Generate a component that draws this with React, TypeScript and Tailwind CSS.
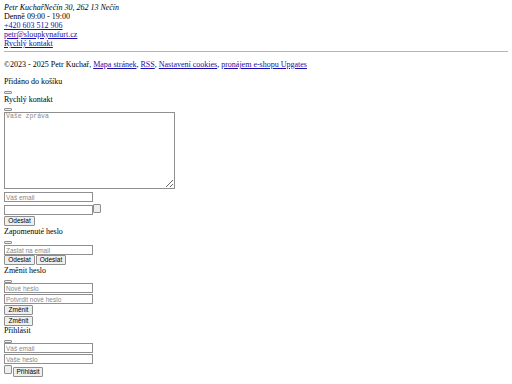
const serif = "font-['Liberation_Serif',serif]";

function Tiny({ mt }: { mt: string }) {
  return <div className={`${mt} h-[3px] w-[8px] rounded-[1px] border border-[#8f8f8f] bg-[#efefef]`} />;
}

function Field({ ph, mt = "mt-[1px]" }: { ph?: string; mt?: string }) {
  return (
    <input
      placeholder={ph}
      className={`${mt} block h-[10px] w-[89px] border border-[#8f8f8f] px-[1px] font-['Liberation_Sans',sans-serif] text-[6.5px] leading-[8px] outline-none placeholder:text-[#8a8a8a]`}
    />
  );
}

function Btn({ label, w, cls = "" }: { label: string; w: string; cls?: string }) {
  return (
    <button
      className={`${cls} ${w} h-[10px] rounded-[1px] border border-[#8f8f8f] bg-[#efefef] font-['Liberation_Sans',sans-serif] text-[6.5px] leading-[8px] text-black`}
    >
      {label}
    </button>
  );
}

export default function App() {
  const link = "text-[#1a0dab] underline";
  return (
    <div className={`${serif} h-[384px] overflow-hidden bg-white px-[4px] pt-[3px] text-[8px] leading-[9px] text-black`}>
      {/* kontakty v patičce */}
      <div className="italic">Petr KuchařNečín 30, 262 13 Nečín</div>
      <div>Denně 09:00 - 19:00</div>
      <div><a className={link}>+420 603 512 906</a></div>
      <div><a className={link}>petr@sloupkynafurt.cz</a></div>
      <div><a className={link}>Rychlý kontakt</a></div>
      <hr className="mt-[3px] border-t border-[#b5b5b5]" />
      <p className="mt-[8px]">
        ©2023 - 2025 Petr Kuchař, <a className={link}>Mapa stránek</a>, <a className={link}>RSS</a>,{" "}
        <a className={link}>Nastavení cookies</a>, <a className={link}>pronájem e-shopu Upgates</a>
      </p>
      <p className="mt-[8px]">Přidáno do košíku</p>

      {/* rychlý kontakt */}
      <Tiny mt="mt-[5px]" />
      <div className="mt-[1px]">Rychlý kontakt</div>
      <Tiny mt="mt-[4px]" />
      <textarea
        placeholder="Vaše zpráva"
        className="mt-[1px] block h-[77px] w-[171px] resize border border-[#8f8f8f] px-[1px] font-['Liberation_Mono',monospace] text-[6.5px] leading-[8px] outline-none placeholder:text-[#8a8a8a]"
      />
      <Field ph="Váš email" mt="mt-[3px]" />
      <div className="mt-[2px] flex items-start">
        <Field mt="mt-[1px]" />
        <div className="h-[9px] w-[8px] rounded-[1px] border border-[#8f8f8f] bg-[#efefef]" />
      </div>
      <Btn label="Odeslat" w="w-[31px]" cls="mt-[1px] block" />

      {/* zapomenuté heslo */}
      <div className="mt-[1px]">Zapomenuté heslo</div>
      <Tiny mt="mt-[5px]" />
      <Field ph="Zaslat na email" />
      <div className="flex">
        <Btn label="Odeslat" w="w-[31px]" />
        <Btn label="Odeslat" w="w-[30px]" cls="ml-[1px]" />
      </div>

      {/* změnit heslo */}
      <div className="mt-[1px]">Změnit heslo</div>
      <Tiny mt="mt-[5px]" />
      <Field ph="Nové heslo" mt="mt-0" />
      <Field ph="Potvrdit nové heslo" />
      <Btn label="Změnit" w="w-[29px]" cls="mt-[1px] block" />
      <Btn label="Změnit" w="w-[29px]" cls="mt-[1px] block" />

      {/* přihlášení */}
      <div>Přihlásit</div>
      <Tiny mt="mt-[5px]" />
      <Field ph="Váš email" mt="mt-0" />
      <Field ph="Vaše heslo" />
      <div className="mt-[1px] flex items-start">
        <div className="h-[9px] w-[8px] rounded-[1px] border border-[#8f8f8f] bg-[#efefef]" />
        <Btn label="Přihlásit" w="w-[30px]" cls="mt-[2px] ml-[1px]" />
      </div>
    </div>
  );
}
